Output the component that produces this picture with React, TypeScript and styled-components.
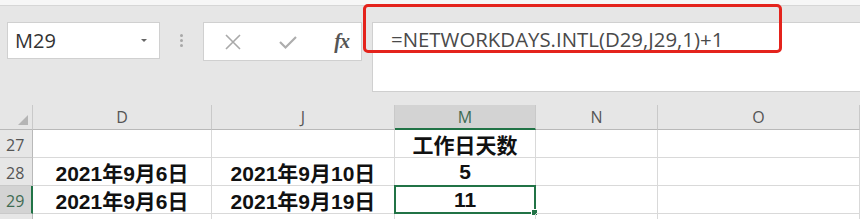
import React from 'react'
import styled, { createGlobalStyle } from 'styled-components'

const GREEN = '#217346'
const SANS = '"Open Sans", "Liberation Sans", sans-serif'
const CJK = '"Liberation Sans", "Noto Sans CJK SC", sans-serif'

const GlobalStyle = createGlobalStyle`
  html, body {
    margin: 0;
    padding: 0;
    background: #e6e6e6;
    overflow: hidden;
  }
  #root {
    width: 860px;
    height: 219px;
    overflow: hidden;
  }
`

const Page = styled.div`
  position: relative;
  width: 860px;
  height: 219px;
  background: #e6e6e6;
  overflow: hidden;
`

const TopStrip = styled.div`
  height: 5px;
  background: #f6f6f6;
  border-bottom: 1px solid #d6d6d6;
`

const Toolbar = styled.div`
  display: flex;
  align-items: flex-start;
  padding: 16px 0 0 7px;
  height: 70px;
`

const NameBox = styled.div`
  display: flex;
  align-items: center;
  justify-content: space-between;
  padding: 0 12px 0 7px;
  box-sizing: border-box;
  width: 153px;
  height: 37px;
  background: #fff;
  border: 1px solid #d0d0d0;
  font-family: ${SANS};
  font-size: 20px;
  color: #333;
`

const Caret = styled.span`
  width: 0;
  height: 0;
  border-left: 3px solid transparent;
  border-right: 3px solid transparent;
  border-top: 3px solid #666;
`

const Grip = styled.div`
  width: 43px;
  height: 37px;
  display: flex;
  flex-direction: column;
  align-items: center;
  justify-content: center;
  gap: 2px;

  span {
    width: 3px;
    height: 3px;
    border-radius: 50%;
    background: #a8a8a8;
  }
`

const FxButtons = styled.div`
  width: 159px;
  height: 39px;
  box-sizing: border-box;
  background: #fff;
  border: 1px solid #d0d0d0;
  display: flex;
  align-items: center;
  justify-content: space-between;
  padding: 0 12px 0 20px;
`

const FxLabel = styled.span`
  font-family: "Liberation Serif", serif;
  font-style: italic;
  font-weight: bold;
  font-size: 20px;
  color: #555;
  letter-spacing: -1px;
`

const FormulaBar = styled.div`
  margin-left: 10px;
  flex: 1;
  height: 70px;
  background: #fff;
  border-left: 1px solid #d0d0d0;
  border-top: 1px solid #d0d0d0;
  border-bottom: 1px solid #cfcfcf;
  box-sizing: border-box;
  padding: 2px 0 0 18px;
  font-family: ${SANS};
  font-size: 20.4px;
  color: #4a4a4a;
`

const Highlight = styled.div`
  position: absolute;
  left: 363px;
  top: 4px;
  width: 419px;
  height: 49px;
  box-sizing: border-box;
  border: 3px solid #e4231c;
  border-radius: 5px;
  pointer-events: none;
`

const Sheet = styled.div`
  margin-top: 13px;
  display: grid;
  grid-template-columns: 33px 179px 183px 141px 122px 1fr;
  grid-auto-rows: 28px;
  grid-template-rows: 25px;
  background: #fff;
`

const Corner = styled.div`
  background: #e6e6e6;
  border-right: 1px solid #c9c9c9;
  border-bottom: 1px solid #b9b9b9;
  display: flex;
  align-items: flex-end;
  justify-content: flex-end;
  padding: 0 4px 4px 0;
  box-sizing: border-box;
`

const ColHead = styled.div<{ $active?: boolean }>`
  background: ${p => (p.$active ? '#d3d3d3' : '#e6e6e6')};
  border-right: 1px solid #c9c9c9;
  border-bottom: ${p => (p.$active ? `2px solid ${GREEN}` : '1px solid #b9b9b9')};
  box-sizing: border-box;
  display: flex;
  align-items: center;
  justify-content: center;
  font-family: ${SANS};
  font-size: 16px;
  color: ${p => (p.$active ? '#3f6b52' : '#555')};
`

const RowHead = styled.div<{ $active?: boolean }>`
  background: ${p => (p.$active ? '#d3d3d3' : '#e6e6e6')};
  border-right: ${p => (p.$active ? `2px solid ${GREEN}` : '1px solid #b9b9b9')};
  border-bottom: 1px solid #c9c9c9;
  box-sizing: border-box;
  display: flex;
  align-items: center;
  padding: 3px 0 0 6px;
  font-family: ${SANS};
  font-size: 16px;
  color: ${p => (p.$active ? '#3f6b52' : '#555')};
`

const Cell = styled.div<{ $selected?: boolean }>`
  position: relative;
  box-sizing: border-box;
  border-right: 1px solid #d9d9d9;
  border-bottom: 1px solid #d9d9d9;
  display: flex;
  align-items: center;
  justify-content: center;
  font-family: ${CJK};
  font-weight: bold;
  font-size: 21px;
  color: #111;
  ${p =>
    p.$selected &&
    `
    border: 2px solid ${GREEN};
    margin: -1px 0 0 -1px;
    width: calc(100% + 1px);
    height: calc(100% + 1px);
  `}
`

const FillHandle = styled.span`
  position: absolute;
  right: -4px;
  bottom: -4px;
  width: 5px;
  height: 5px;
  background: ${GREEN};
  border: 1px solid #fff;
`

const CloseIcon = () => (
  <svg width="18" height="18" viewBox="0 0 18 18">
    <path d="M2 2 L16 16 M16 2 L2 16" stroke="#a9a9a9" strokeWidth="1.6" fill="none" />
  </svg>
)

const CheckIcon = () => (
  <svg width="22" height="18" viewBox="0 0 22 18">
    <path d="M3 9 L8.5 14.5 L19 4" stroke="#adadad" strokeWidth="2.2" fill="none" />
  </svg>
)

const CornerMark = () => (
  <svg width="10" height="10" viewBox="0 0 10 10">
    <path d="M10 0 L10 10 L0 10 Z" fill="#b5b5b5" />
  </svg>
)

const columns = ['D', 'J', 'M', 'N', 'O']

const rows: { num: string; cells: string[] }[] = [
  { num: '27', cells: ['', '', '工作日天数', '', ''] },
  { num: '28', cells: ['2021年9月6日', '2021年9月10日', '5', '', ''] },
  { num: '29', cells: ['2021年9月6日', '2021年9月19日', '11', '', ''] },
  { num: '', cells: ['', '', '', '', ''] },
]

export default function App() {
  return (
    <Page>
      <GlobalStyle />
      <TopStrip />
      <Toolbar>
        <NameBox>
          M29
          <Caret />
        </NameBox>
        <Grip>
          <span />
          <span />
          <span />
        </Grip>
        <FxButtons>
          <CloseIcon />
          <CheckIcon />
          <FxLabel>fx</FxLabel>
        </FxButtons>
        <FormulaBar>=NETWORKDAYS.INTL(D29,J29,1)+1</FormulaBar>
      </Toolbar>
      <Highlight />
      <Sheet>
        <Corner>
          <CornerMark />
        </Corner>
        {columns.map(c => (
          <ColHead key={c} $active={c === 'M'}>
            {c}
          </ColHead>
        ))}
        {rows.map((r, ri) => (
          <React.Fragment key={ri}>
            <RowHead $active={r.num === '29'}>{r.num}</RowHead>
            {r.cells.map((v, i) => {
              const selected = r.num === '29' && i === 2
              return (
                <Cell key={i} $selected={selected}>
                  {v}
                  {selected && <FillHandle />}
                </Cell>
              )
            })}
          </React.Fragment>
        ))}
      </Sheet>
    </Page>
  )
}
